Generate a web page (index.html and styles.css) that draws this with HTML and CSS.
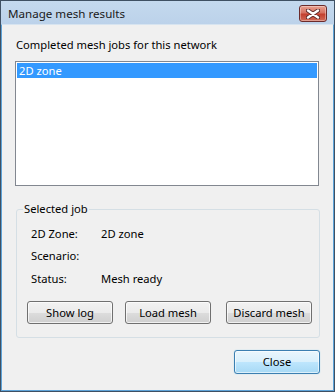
FILE: index.html
```html
<!DOCTYPE html>
<html>
<head>
<meta charset="utf-8">
<link rel="stylesheet" href="styles.css">
</head>
<body>
<div class="window">
  <div class="titlebar">
    <span class="title">Manage mesh results</span>
    <div class="closebtn">
      <svg width="14" height="10" viewBox="0 0 14 10">
        <path d="M2 1.5 L12 8.5 M12 1.5 L2 8.5" stroke="#5a2a2a" stroke-width="4.2" stroke-linecap="round"/>
        <path d="M2 1.5 L12 8.5 M12 1.5 L2 8.5" stroke="#ffffff" stroke-width="2.4" stroke-linecap="round"/>
      </svg>
    </div>
  </div>
  <div class="client">
    <div class="caption">Completed mesh jobs for this network</div>
    <div class="listbox">
      <div class="item selected">2D zone</div>
    </div>
    <fieldset class="group">
      <legend>Selected job</legend>
      <div class="rows">
        <div class="row r1"><span class="key">2D Zone:</span><span class="val">2D zone</span></div>
        <div class="row r2"><span class="key">Scenario:</span><span class="val"></span></div>
        <div class="row r3"><span class="key">Status:</span><span class="val">Mesh ready</span></div>
      </div>
      <div class="buttons">
        <div class="btn b1">Show log</div>
        <div class="btn b2">Load mesh</div>
        <div class="btn b3">Discard mesh</div>
      </div>
    </fieldset>
    <div class="footer">
      <div class="btn default">Close</div>
    </div>
  </div>
</div>
</body>
</html>
```
FILE: styles.css
```css
html, body {
  margin: 0;
  padding: 0;
}
body {
  width: 335px;
  height: 392px;
  overflow: hidden;
  font-family: "Noto Sans", "Open Sans", sans-serif;
  font-size: 11.2px;
  color: #000;
}
.window {
  box-sizing: border-box;
  width: 335px;
  height: 392px;
  border: 1px solid #3f5063;
  display: flex;
  flex-direction: column;
  background: #bdd3ea;
}
.titlebar {
  height: 23px;
  display: flex;
  align-items: flex-start;
  justify-content: space-between;
  background: linear-gradient(#c4d9ee, #bcd2ea);
}
.title {
  margin-left: 7px;
  margin-top: 5px;
  line-height: 16px;
  font-size: 11.6px;
  color: #1a1a1a;
}
.closebtn {
  box-sizing: border-box;
  width: 28px;
  height: 17px;
  margin-top: 4px;
  margin-right: 7px;
  border: 1px solid #6b2b2b;
  border-radius: 3px;
  background: linear-gradient(#e8a090 0%, #d67262 45%, #c4402f 55%, #d06a57 100%);
  display: flex;
  align-items: center;
  justify-content: center;
  box-shadow: inset 0 0 0 1px rgba(255,255,255,0.35);
}
.client {
  flex: 1;
  background: #f0f0f0;
  border: 1px solid #5ea3d8;
  border-top: 1px solid #d7e4f0;
  padding: 0 13px;
  display: flex;
  flex-direction: column;
}
.caption {
  margin-top: 12px;
  margin-left: 1px;
  line-height: 16px;
}
.listbox {
  box-sizing: border-box;
  width: 304px;
  height: 125px;
  margin-top: 8px;
  border: 1px solid #828790;
  background: #fff;
  padding: 1px;
}
.item {
  height: 15px;
  line-height: 15px;
  padding-left: 2px;
}
.selected {
  background: #3399ff;
  color: #fff;
}
.group {
  box-sizing: border-box;
  width: 304px;
  height: 137px;
  margin: 15px 0 0 1px;
  padding: 0;
  border: 1px solid #d5dfe5;
  border-radius: 3px;
  min-width: 0;
}
.group legend {
  margin-left: 6px;
  padding: 0 1px;
  line-height: 16px;
}
.rows {
  padding-left: 14px;
  padding-top: 9px;
}
.row {
  display: flex;
  line-height: 16px;
}
.r1 { height: 22px; }
.r2 { height: 23px; }
.r3 { height: 16px; }
.key {
  width: 70px;
}
.buttons {
  display: flex;
  margin-top: 14px;
  padding-left: 10px;
}
.btn {
  box-sizing: border-box;
  width: 86px;
  height: 23px;
  border: 1px solid #707070;
  border-radius: 3px;
  background: linear-gradient(#f2f2f2 0%, #ebebeb 50%, #dddddd 50%, #cfcfcf 100%);
  box-shadow: inset 0 0 0 1px rgba(255,255,255,0.7);
  display: flex;
  align-items: center;
  justify-content: center;
  line-height: 16px;
  color: #000;
}
.b2 { margin-left: 12px; }
.b3 { margin-left: 15px; }
.footer {
  display: flex;
  justify-content: flex-end;
  margin-top: 12px;
}
.default {
  height: 24px;
  border-color: #3c7fb1;
  background: linear-gradient(#eaf6fd 0%, #d9f0fc 50%, #bee6fd 50%, #a7d9f5 100%);
  box-shadow: inset 0 0 0 1px rgba(255,255,255,0.6), 0 0 1px #6fc6f0;
}
```
